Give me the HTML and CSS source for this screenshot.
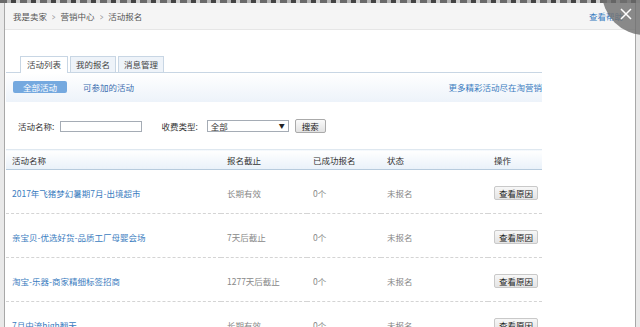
FILE: index.html
```html
<!DOCTYPE html>
<html lang="zh-CN">
<head>
    <meta charset="UTF-8">
    <title>活动报名</title>
    <link rel="stylesheet" href="styles.css">
</head>
<body>
    <div class="top-strip"></div>
    <div class="dialog">
        <div class="dialog-head">
            <div class="crumbs">
                <span>我是卖家</span><span class="sep">&gt;</span><span>营销中心</span><span class="sep">&gt;</span><span>活动报名</span>
            </div>
            <a class="help">查看帮助</a>
        </div>

        <div class="panel">
            <ul class="tabs">
                <li class="tab active">活动列表</li>
                <li class="tab">我的报名</li>
                <li class="tab">消息管理</li>
            </ul>

            <div class="subnav">
                <span class="pill">全部活动</span>
                <a class="sub-link">可参加的活动</a>
                <a class="more">更多精彩活动尽在淘营销</a>
            </div>

            <div class="search">
                <label class="field-label">活动名称:</label>
                <input class="text-input" type="text">
                <label class="field-label type-label">收费类型:</label>
                <div class="select">全部<span class="arrow">▼</span></div>
                <button class="search-btn">搜索</button>
            </div>

            <table class="list">
                <thead>
                    <tr>
                        <th class="c-name">活动名称</th>
                        <th class="c-end">报名截止</th>
                        <th class="c-count">已成功报名</th>
                        <th class="c-state">状态</th>
                        <th class="c-op">操作</th>
                    </tr>
                </thead>
                <tbody>
                    <tr>
                        <td><a class="act-link">2017年飞猪梦幻暑期7月-出境超市</a></td>
                        <td>长期有效</td>
                        <td>0个</td>
                        <td>未报名</td>
                        <td><button class="reason-btn">查看原因</button></td>
                    </tr>
                    <tr>
                        <td><a class="act-link">亲宝贝-优选好货-品质工厂母婴会场</a></td>
                        <td>7天后截止</td>
                        <td>0个</td>
                        <td>未报名</td>
                        <td><button class="reason-btn">查看原因</button></td>
                    </tr>
                    <tr>
                        <td><a class="act-link">淘宝-乐器-商家精细标签招商</a></td>
                        <td>1277天后截止</td>
                        <td>0个</td>
                        <td>未报名</td>
                        <td><button class="reason-btn">查看原因</button></td>
                    </tr>
                    <tr>
                        <td><a class="act-link">7月中流high翻天</a></td>
                        <td>长期有效</td>
                        <td>0个</td>
                        <td>未报名</td>
                        <td><button class="reason-btn">查看原因</button></td>
                    </tr>
                </tbody>
            </table>
        </div>
    </div>

    <svg class="close" width="38" height="36" viewBox="0 0 38 36">
        <circle cx="43" cy="-8" r="43" fill="#6e6e6e" fill-opacity="0.8"/>
        <path d="M19 9 L29 19 M29 9 L19 19" stroke="#fff" stroke-width="1.5" fill="none"/>
    </svg>
</body>
</html>
```

FILE: styles.css
```css
body {
    margin: 0;
    height: 327px;
    overflow: hidden;
    background-color: #e9e9e9;
    font-family: "Noto Sans CJK SC", "Liberation Sans", sans-serif;
    font-size: 8.5px;
    color: #333;
}

a {
    cursor: pointer;
}

.top-strip {
    height: 3px;
    background: repeating-linear-gradient(90deg, #6a6a6a 0 7px, #b5b5b5 7px 11px, #444 11px 16px, #d0d0d0 16px 20px);
}

.dialog {
    margin-left: 4px;
    width: 630px;
    height: 324px;
    background-color: #fff;
    border-left: 1px solid #a8a8a8;
    border-right: 1px solid #a8a8a8;
    overflow: hidden;
}

.dialog-head {
    height: 26px;
    display: flex;
    align-items: center;
    justify-content: space-between;
    padding: 0 12px 0 8px;
    background-color: #f5f5f5;
    border-bottom: 1px solid #e6e6e6;
    color: #555;
}

.crumbs {
    display: flex;
    align-items: center;
}

.crumbs .sep {
    margin: 0 4px;
    color: #999;
    font-size: 10px;
    transform: scaleX(0.6);
}

.help {
    color: #3a7cc0;
}

.panel {
    width: 536px;
    margin-left: 1px;
    padding-top: 26px;
}

.tabs {
    display: flex;
    margin: 0;
    padding: 0 0 0 14px;
    list-style: none;
    border-bottom: 1px solid #c8d6e4;
}

.tab {
    height: 15px;
    line-height: 15px;
    padding: 0 5px;
    margin-right: 2px;
    margin-bottom: -1px;
    border: 1px solid #c8d6e4;
    border-bottom: none;
    background-color: #eef3f9;
    color: #444;
}

.tab.active {
    background-color: #fff;
    height: 16px;
    padding: 0 6px;
}

.subnav {
    height: 29px;
    display: flex;
    align-items: flex-start;
    padding: 8px 0 0 7px;
    box-sizing: border-box;
    background: linear-gradient(#fff, #edf3fa);
}

.pill {
    height: 12px;
    line-height: 12px;
    padding: 0 10px;
    border-radius: 2px;
    background-color: #75a9df;
    color: #fff;
}

.sub-link {
    margin-left: 16px;
    line-height: 12px;
    color: #3d6fb0;
}

.more {
    margin-left: auto;
    line-height: 12px;
    color: #3a7cc0;
}

.search {
    display: flex;
    align-items: center;
    height: 14px;
    margin-top: 17px;
    padding-left: 12px;
}

.field-label {
    color: #333;
}

.text-input {
    width: 82px;
    height: 11px;
    margin-left: 6px;
    padding: 0;
    border: 1px solid #a5acb5;
    box-sizing: border-box;
}

.type-label {
    margin-left: 19px;
}

.select {
    width: 82px;
    height: 12px;
    line-height: 10px;
    margin-left: 9px;
    padding: 0 3px;
    box-sizing: border-box;
    border: 1px solid #a5acb5;
    display: flex;
    justify-content: space-between;
}

.select .arrow {
    font-size: 6px;
    color: #222;
}

.search-btn {
    height: 14px;
    margin-left: 6px;
    padding: 0 6px;
    font: inherit;
    line-height: 12px;
    color: #222;
    border: 1px solid #aaa;
    border-radius: 2px;
    background: linear-gradient(#fafafa, #e2e2e2);
}

.list {
    width: 536px;
    margin-top: 16px;
    border-collapse: collapse;
    table-layout: fixed;
}

.list th {
    height: 19px;
    padding: 0 0 0 6px;
    text-align: left;
    font-weight: normal;
    color: #333;
    border-top: 1px solid #dfe8f0;
    border-bottom: 1px solid #b7cbdd;
    background: linear-gradient(#fff, #e9f1f9);
}

.c-name {
    width: 209px;
}

.c-end {
    width: 80px;
}

.c-count {
    width: 68px;
}

.c-state {
    width: 101px;
}

.list td {
    height: 44px;
    padding: 2px 0 0 6px;
    box-sizing: border-box;
    color: #888;
    border-bottom: 1px dashed #d4d4d4;
}

.act-link {
    color: #3a7cc0;
}

.reason-btn {
    height: 14px;
    padding: 0 4px;
    font: inherit;
    line-height: 12px;
    color: #222;
    border: 1px solid #c9c9c9;
    border-radius: 2px;
    background: linear-gradient(#f7f7f7, #e4e4e4);
}

.close {
    position: absolute;
    left: 602px;
    top: 0;
}
```
